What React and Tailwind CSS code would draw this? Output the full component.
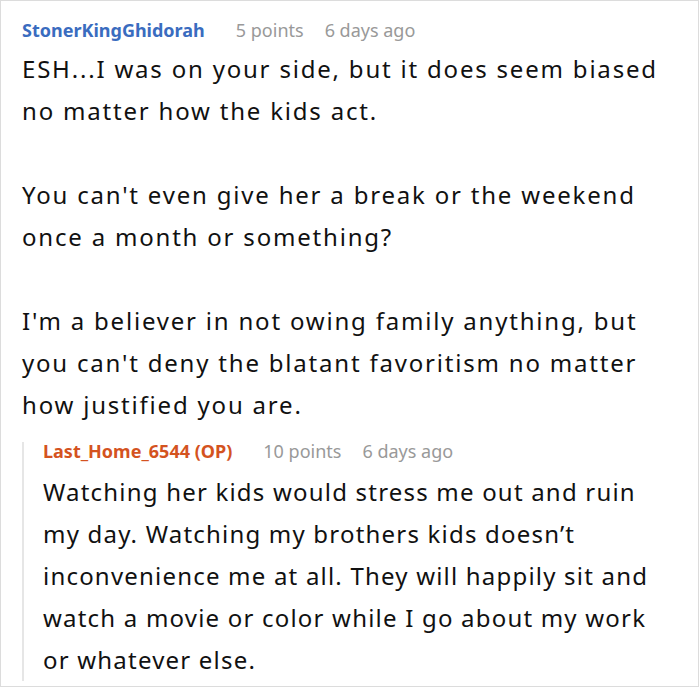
export default function App() {
  return (
    <div
      className="w-[699px] h-[687px] border border-[#dcdcdc] bg-white overflow-hidden pl-[21px] pr-[18px] text-[#111]"
      style={{ fontFamily: "'Noto Sans', sans-serif" }}
    >
      {/* top comment */}
      <div className="flex items-baseline text-[18px] leading-[26px] mt-[16px]">
        <span className="font-bold text-[#3a6cbf]">StonerKingGhidorah</span>
        <span className="ml-[31px] text-[#999]">5 points</span>
        <span className="ml-[21px] text-[#999]">6 days ago</span>
      </div>
      <div className="text-[24px] leading-[42px] tracking-[1.8px] mt-[5px]">
        <p>ESH...I was on your side, but it does seem biased no matter how the kids act.</p>
        <p className="mt-[42px]">You can't even give her a break or the weekend once a month or something?</p>
        <p className="mt-[42px]">I'm a believer in not owing family anything, but you can't deny the blatant favoritism no matter how justified you are.</p>
      </div>

      {/* reply */}
      <div className="mt-[23px] border-l-2 border-[#e6e6e6] pl-[19px]">
        <div className="flex items-baseline text-[18px] leading-[18px] -mt-[7px]">
          <span className="font-bold text-[#d4531f]">Last_Home_6544 (OP)</span>
          <span className="ml-[31px] text-[#999]">10 points</span>
          <span className="ml-[21px] text-[#999]">6 days ago</span>
        </div>
        <p className="text-[24px] leading-[42px] tracking-[1.2px] mt-[11px] -mb-[12px]">
          Watching her kids would stress me out and ruin my day. Watching my brothers kids doesn’t inconvenience me at all. They will happily sit and watch a movie or color while I go about my work or whatever else.
        </p>
      </div>
    </div>
  );
}
